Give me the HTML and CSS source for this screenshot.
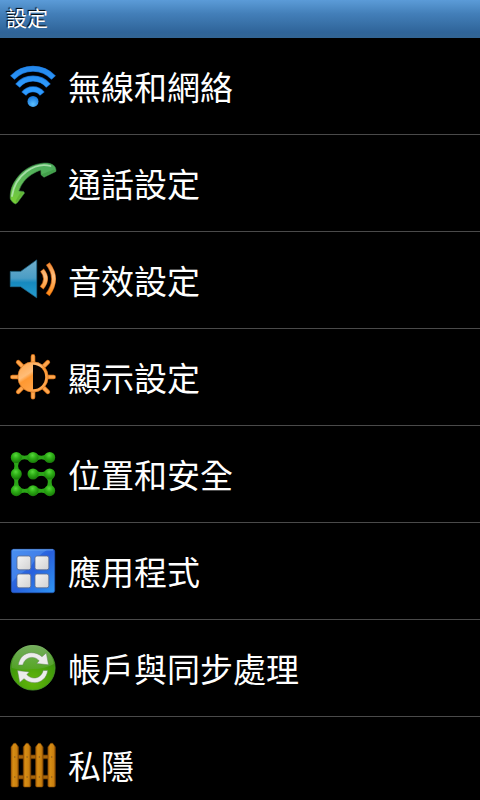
FILE: index.html
```html
<!DOCTYPE html>
<html lang="zh-Hant">
<head>
<meta charset="utf-8">
<meta name="viewport" content="width=device-width, initial-scale=1">
<title>設定</title>
<link rel="stylesheet" href="styles.css">
</head>
<body>
<header class="titlebar"><h1>設定</h1></header>
<main class="settings">
<ul class="list">
<li><a class="row" href="#wireless">
<svg class="icon" viewBox="0 0 48 48" aria-hidden="true">
<defs>
<linearGradient id="wf" gradientUnits="userSpaceOnUse" x1="0" y1="4" x2="0" y2="45"><stop offset="0" stop-color="#2487ea"/><stop offset=".5" stop-color="#2e9cff"/><stop offset="1" stop-color="#2a98fb"/></linearGradient>
<radialGradient id="wd" cx=".5" cy=".75" r=".7"><stop offset="0" stop-color="#5cc0ff"/><stop offset="1" stop-color="#1677dd"/></radialGradient>
</defs>
<g fill="none" stroke="#1769c6" stroke-width="6"><path d="M3.3 15.7A28.2 28.2 0 0 1 44.7 15.7"/><path d="M8.5 23.8A20.2 20.2 0 0 1 39.5 23.8"/><path d="M14.7 31.8A11.8 11.8 0 0 1 33.3 31.8"/></g>
<g fill="none" stroke="url(#wf)" stroke-width="4.6"><path d="M3.7 15.3A28.2 28.2 0 0 1 44.3 15.3"/><path d="M8.9 23.4A20.2 20.2 0 0 1 39.1 23.4"/><path d="M15.1 31.4A11.8 11.8 0 0 1 32.9 31.4"/></g>
<circle cx="24" cy="39.4" r="5.5" fill="url(#wd)"/>
</svg><span>無線和網絡</span></a></li>
<li><a class="row" href="#call">
<svg class="icon" viewBox="0 0 48 48" aria-hidden="true">
<defs><linearGradient id="ph" x1=".6" y1="0" x2=".2" y2="1"><stop offset="0" stop-color="#4dae5c"/><stop offset=".55" stop-color="#5fb957"/><stop offset="1" stop-color="#78cf35"/></linearGradient></defs>
<path d="M47 12.4C47.2 9.5 46.3 7.3 43.5 5.6C40.5 4 37 3.8 33.5 4.2C26 5 19.5 8 14 12.6C8 17.7 3.5 25 1.9 31.3C1.1 35 1 39 1.4 40.2C2.5 42 4.5 44.5 6.5 44.9L8.3 43.8L15.6 34L14.5 32.4L9.8 31.9C12.5 24.5 16.5 19.5 22.7 15.5C25.8 13.5 28.8 12 31.8 11.2L32 15.8L35 18.3Z" fill="url(#ph)" stroke="#3b8245" stroke-width=".6"/>
<path d="M3 37C4.5 27 9.5 18.5 17.5 12.5C25 7 34 4.8 41.5 7" fill="none" stroke="#b9e9b9" stroke-width="1.8" stroke-linecap="round" opacity=".8"/>
<path d="M32 15.6L35 17.8L46.7 12L45 10.6Z" fill="#43a04b"/>
<path d="M14.8 33.2L7.5 43.8L6.5 42L11.8 33Z" fill="#62b535"/>
</svg><span>通話設定</span></a></li>
<li><a class="row" href="#sound">
<svg class="icon" viewBox="0 0 48 48" aria-hidden="true">
<defs>
<linearGradient id="sp" x1="0" y1="0" x2="0" y2="1"><stop offset="0" stop-color="#70aecb"/><stop offset=".48" stop-color="#4b9dc5"/><stop offset=".6" stop-color="#1689be"/><stop offset="1" stop-color="#269dcf"/></linearGradient>
<linearGradient id="sw" gradientUnits="userSpaceOnUse" x1="0" y1="7" x2="0" y2="40"><stop offset="0" stop-color="#f08a32"/><stop offset=".4" stop-color="#ffc080"/><stop offset="1" stop-color="#ff8508"/></linearGradient>
</defs>
<path d="M1.3 15.4H11.7L27.7 3.9V41.8L11.7 30.7H1.3Z" fill="url(#sp)" stroke="#226c8e" stroke-width=".7"/>
<g fill="none" stroke="#b9560f" stroke-width="4.8"><path d="M33 14Q40.3 22.8 32.6 32"/><path d="M38.8 7.6Q50.5 23 38.6 38.8"/></g>
<g fill="none" stroke="url(#sw)" stroke-width="3.5"><path d="M33.3 14.3Q40.3 22.8 33 31.6"/><path d="M39.1 8Q50.5 23 39 38.4"/></g>
</svg><span>音效設定</span></a></li>
<li><a class="row" href="#display">
<svg class="icon" viewBox="0 0 48 48" aria-hidden="true">
<defs><linearGradient id="su" gradientUnits="userSpaceOnUse" x1="8" y1="4" x2="34" y2="44"><stop offset="0" stop-color="#ff9a35"/><stop offset=".42" stop-color="#ffbd78"/><stop offset=".5" stop-color="#ff9831"/><stop offset="1" stop-color="#ffae5c"/></linearGradient></defs>
<g stroke="#c96812" stroke-width="4.6" stroke-linecap="round"><path d="M24 3.4V44.2M3.4 24H44.6M9.2 9.2L38.8 38.8M38.8 9.2L9.2 38.8"/></g>
<g stroke="#ffa64c" stroke-width="3.2" stroke-linecap="round"><path d="M24 3.4V44.2M3.4 24H44.6M9.2 9.2L38.8 38.8M38.8 9.2L9.2 38.8"/></g>
<circle cx="24" cy="24" r="15.2" fill="url(#su)" stroke="#d5751f" stroke-width=".7"/>
<path d="M24 11.8A12.2 12.2 0 0 1 24 36.2Z" fill="#050200"/>
</svg><span>顯示設定</span></a></li>
<li><a class="row" href="#location">
<svg class="icon" viewBox="0 0 48 48" aria-hidden="true">
<defs>
<radialGradient id="nd" cx=".45" cy=".3" r=".7"><stop offset="0" stop-color="#58d83c"/><stop offset=".45" stop-color="#2dae16"/><stop offset="1" stop-color="#187808"/></radialGradient>
<path id="lk" d="M3 -4Q8.3 .4 13.7 -4V4Q8.3 -.4 3 4Z"/>
</defs>
<g fill="none" stroke="#2ba517" stroke-width="3"><path d="M40.7 7.5H7.3V40.7H40.7V24H23.7"/></g>
<g fill="#2ba517">
<use href="#lk" transform="translate(7.3 7.5)"/><use href="#lk" transform="translate(24 7.5)"/>
<use href="#lk" transform="translate(7.3 40.7)"/><use href="#lk" transform="translate(24 40.7)"/>
<use href="#lk" transform="translate(24 24)"/>
<use href="#lk" transform="translate(7.3 7.5) rotate(90)"/><use href="#lk" transform="translate(7.3 24) rotate(90)"/>
<use href="#lk" transform="translate(40.7 24) rotate(90)"/>
</g>
<g fill="url(#nd)"><circle cx="7.3" cy="7.5" r="5.5"/><circle cx="24" cy="7.5" r="5.5"/><circle cx="40.7" cy="7.5" r="5.5"/><circle cx="7.3" cy="24" r="5.5"/><circle cx="24" cy="24" r="5.5"/><circle cx="40.7" cy="24" r="5.5"/><circle cx="7.3" cy="40.7" r="5.5"/><circle cx="24" cy="40.7" r="5.5"/><circle cx="40.7" cy="40.7" r="5.5"/></g>
</svg><span>位置和安全</span></a></li>
<li><a class="row" href="#apps">
<svg class="icon" viewBox="0 0 48 48" aria-hidden="true">
<defs>
<linearGradient id="ap" x1="0" y1="0" x2="1" y2="1"><stop offset="0" stop-color="#3c86ee"/><stop offset=".5" stop-color="#2860dd"/><stop offset="1" stop-color="#2f96f3"/></linearGradient>
<linearGradient id="tl" x1="0" y1="0" x2="1" y2="1"><stop offset="0" stop-color="#f4f4f4"/><stop offset="1" stop-color="#d2d2d2"/></linearGradient>
</defs>
<rect x="2.3" y="2.3" width="43.4" height="43.4" rx="2.2" fill="url(#ap)" stroke="#2355b4" stroke-width=".7"/>
<path d="M3 3H38Q27 9 21 21Q12 25 3 35Z" fill="#5e9df5" opacity=".45"/>
<path d="M4 2.9H44" stroke="#79b4f8" stroke-width=".8"/>
<g fill="url(#tl)" stroke="#5b6a8c" stroke-width=".8"><rect x="8" y="9" width="13.8" height="13.8" rx="2"/><rect x="26" y="9" width="13.8" height="13.8" rx="2"/><rect x="8" y="27" width="13.8" height="13.8" rx="2"/><rect x="26" y="27" width="13.8" height="13.8" rx="2"/></g>
</svg><span>應用程式</span></a></li>
<li><a class="row" href="#sync">
<svg class="icon" viewBox="0 0 48 48" aria-hidden="true">
<defs>
<radialGradient id="sy" cx=".5" cy=".8" r=".75"><stop offset="0" stop-color="#62b60a"/><stop offset=".7" stop-color="#409a0a"/><stop offset="1" stop-color="#347f13"/></radialGradient>
<linearGradient id="sh" x1="0" y1="0" x2="0" y2="1"><stop offset="0" stop-color="#a2cf90"/><stop offset="1" stop-color="#5aa336"/></linearGradient>
</defs>
<circle cx="23.8" cy="23.8" r="22.3" fill="url(#sy)" stroke="#4b992d" stroke-width=".8"/>
<path d="M2.8 24A21 21 0 0 1 44.8 20Q36 25 24 25Q12 27 2.8 24Z" fill="url(#sh)" opacity=".6"/>
<g fill="#ececec" stroke="#64845a" stroke-width=".5">
<path d="M9.3 20.9C10.3 13.4 15.8 8.8 22 8.7C26.3 8.6 30 10 33 12.7L37.3 9L39.5 20.8L27.7 19.5L30.2 16.8C28 14.4 25.3 13.3 22.7 13.4C18.6 13.5 15 16.2 13.8 21Z"/>
<path transform="rotate(180 24 23.7)" d="M9.3 20.9C10.3 13.4 15.8 8.8 22 8.7C26.3 8.6 30 10 33 12.7L37.3 9L39.5 20.8L27.7 19.5L30.2 16.8C28 14.4 25.3 13.3 22.7 13.4C18.6 13.5 15 16.2 13.8 21Z"/>
</g>
</svg><span>帳戶與同步處理</span></a></li>
<li><a class="row" href="#privacy">
<svg class="icon" viewBox="0 0 48 48" aria-hidden="true">
<defs><linearGradient id="fe" x1="0" y1="0" x2="1" y2="0"><stop offset="0" stop-color="#ae6208"/><stop offset=".3" stop-color="#d68d15"/><stop offset=".75" stop-color="#ca800f"/><stop offset="1" stop-color="#8c4c05"/></linearGradient></defs>
<g fill="#a86409" stroke="#603303" stroke-width=".7"><rect x="7" y="14" width="34" height="3.8"/><rect x="7" y="34.2" width="34" height="3.8"/></g>
<g fill="url(#fe)" stroke="#7f4604" stroke-width=".6"><path d="M2 6L4.8 2.3H6.8L9.5 6V45L8.7 46H2.8L2 45Z"/><path d="M14.3 6L17.1 2.3H19.1L21.8 6V45L21 46H15.1L14.3 45Z"/><path d="M26.6 6L29.4 2.3H31.4L34.1 6V45L33.3 46H27.4L26.6 45Z"/><path d="M38.9 6L41.7 2.3H43.7L46.4 6V45L45.6 46H39.7L38.9 45Z"/></g>
<g fill="#8a5c20"><circle cx="5.8" cy="16" r=".8"/><circle cx="18.1" cy="16" r=".8"/><circle cx="30.4" cy="16" r=".8"/><circle cx="42.7" cy="16" r=".8"/><circle cx="5.8" cy="36" r=".8"/><circle cx="18.1" cy="36" r=".8"/><circle cx="30.4" cy="36" r=".8"/><circle cx="42.7" cy="36" r=".8"/></g>
</svg><span>私隱</span></a></li>
</ul>
</main>
</body>
</html>
```
FILE: styles.css
```css
* {
  box-sizing: border-box;
}

body {
  margin: 0;
  height: 100vh;
  display: flex;
  flex-direction: column;
  background: #000;
  color: #fff;
  font-family: "Noto Sans CJK TC", sans-serif;
}

.titlebar {
  flex: none;
  padding: 2px 6px 6px;
  background: linear-gradient(#5b9bd8 0, #5594cf 10%, #437fb9 36%, #2f6499 85%, #336594 100%);
}

.titlebar h1 {
  margin: 0;
  font-size: 21px;
  line-height: 30px;
  font-weight: 400;
  text-shadow: -1px -1px 1px #000;
}

.settings {
  flex: 1;
  min-height: 0;
  overflow-y: auto;
  scrollbar-width: none;
}

.list {
  margin: 0;
  padding: 0;
  list-style: none;
}

.row {
  display: flex;
  align-items: center;
  gap: 11px;
  padding: 24px 9px;
  border-bottom: 1px solid #4a4a4a;
  color: inherit;
  font-size: 33px;
  line-height: 48px;
  text-decoration: none;
}

.icon {
  flex: none;
  width: 48px;
  height: 48px;
}
```
